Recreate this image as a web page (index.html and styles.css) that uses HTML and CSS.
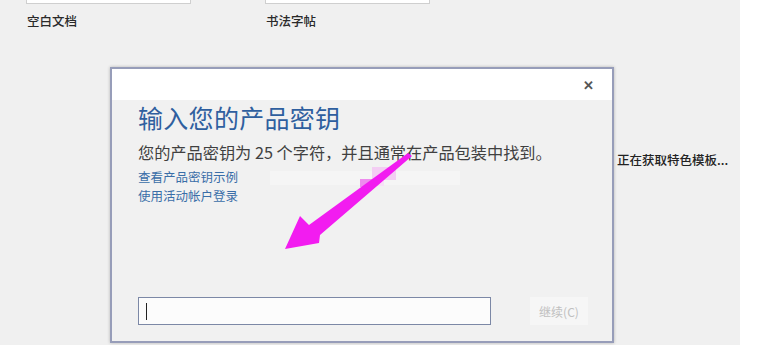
FILE: index.html
```html
<!DOCTYPE html>
<html lang="zh-CN">
<head>
<meta charset="utf-8">
<title>输入您的产品密钥</title>
<link rel="stylesheet" href="styles.css">
</head>
<body>
<div class="app">
  <div class="templates">
    <div class="tpl">
      <div class="thumb"></div>
      <div class="tpl-name">空白文档</div>
    </div>
    <div class="tpl">
      <div class="thumb"></div>
      <div class="tpl-name">书法字帖</div>
    </div>
  </div>
  <div class="loading">正在获取特色模板...</div>
</div>

<div class="dialog">
  <div class="titlebar">
    <span class="close">&#x2715;</span>
  </div>
  <div class="dlg-body">
    <h1 class="dlg-title">输入您的产品密钥</h1>
    <p class="dlg-desc">您的产品密钥为 25 个字符，并且通常在产品包装中找到。</p>
    <a class="dlg-link">查看产品密钥示例</a>
    <a class="dlg-link">使用活动帐户登录</a>
    <div class="dlg-bottom">
      <div class="key-input"><span class="caret"></span></div>
      <div class="btn-continue">继续(C)</div>
    </div>
  </div>
</div>

<svg class="annot" width="763" height="345" viewBox="0 0 763 345">
  <rect x="270" y="171" width="190" height="14" fill="#f6f6f6" opacity="0.7"/>
  <rect x="372" y="167" width="24" height="13" fill="#f3cdf3"/>
  <rect x="360" y="179" width="12" height="8" fill="#ee8cee"/>
  <rect x="372" y="180" width="12" height="6" fill="#f7e0f7"/>
  <polygon points="285,249 300,216 309,225 408,153 412,156 320,235 319,243" fill="#f21cf0"/>
</svg>
</body>
</html>
```
FILE: styles.css
```css
html, body {
  margin: 0;
  padding: 0;
  background: #ffffff;
  font-family: "Noto Sans CJK SC", "Noto Sans", sans-serif;
}

.app {
  width: 740px;
  height: 345px;
  background: #f0f0f0;
  overflow: hidden;
}

.templates {
  display: flex;
  gap: 74px;
  padding-left: 26px;
  margin-top: -40px;
}

.tpl {
  width: 165px;
}

.thumb {
  height: 44px;
  background: #ffffff;
  border: 1px solid #cfcfcf;
  box-sizing: border-box;
}

.tpl-name {
  margin-top: 9px;
  font-size: 12.5px;
  line-height: 16px;
  color: #2a2a2a;
  font-weight: 500;
  padding-left: 1px;
}

.loading {
  margin-top: 123px;
  padding-left: 617px;
  font-size: 12.5px;
  line-height: 16px;
  color: #222222;
  font-weight: 500;
  white-space: nowrap;
}

.dialog {
  position: absolute;
  left: 110px;
  top: 67px;
  width: 504px;
  height: 276px;
  box-sizing: border-box;
  border: 2px solid #979db9;
  background: #f1f1f1;
  box-shadow: 0 0 3px rgba(0, 0, 0, 0.25);
  display: flex;
  flex-direction: column;
}

.titlebar {
  height: 31px;
  background: #ffffff;
  display: flex;
  justify-content: flex-end;
  align-items: center;
  padding-right: 18px;
}

.close {
  font-size: 13px;
  font-weight: bold;
  color: #555555;
  line-height: 14px;
}

.dlg-body {
  flex: 1;
  display: flex;
  flex-direction: column;
  padding: 2px 0 16px 26px;
}

.dlg-title {
  margin: 0;
  font-size: 25px;
  font-weight: normal;
  line-height: 30px;
  color: #2f5f9f;
  letter-spacing: 0.3px;
}

.dlg-desc {
  margin: 10px 0 0;
  font-size: 16.2px;
  line-height: 20px;
  color: #404040;
}

.dlg-link {
  font-size: 12.5px;
  line-height: 19px;
  color: #3a6ea8;
}

.dlg-link:first-of-type {
  margin-top: 5px;
}

.dlg-bottom {
  margin-top: auto;
  display: flex;
  align-items: center;
}

.key-input {
  width: 353px;
  height: 28px;
  box-sizing: border-box;
  border: 1px solid #7c88a6;
  background: #fcfcfc;
  display: flex;
  align-items: center;
  padding-left: 7px;
}

.caret {
  width: 1px;
  height: 17px;
  background: #222222;
}

.btn-continue {
  margin-left: 39px;
  width: 58px;
  height: 28px;
  background: #f6f6f6;
  color: #c0c0c0;
  font-size: 12px;
  display: flex;
  align-items: center;
  justify-content: center;
}

.annot {
  position: absolute;
  left: 0;
  top: 0;
  pointer-events: none;
}
```
